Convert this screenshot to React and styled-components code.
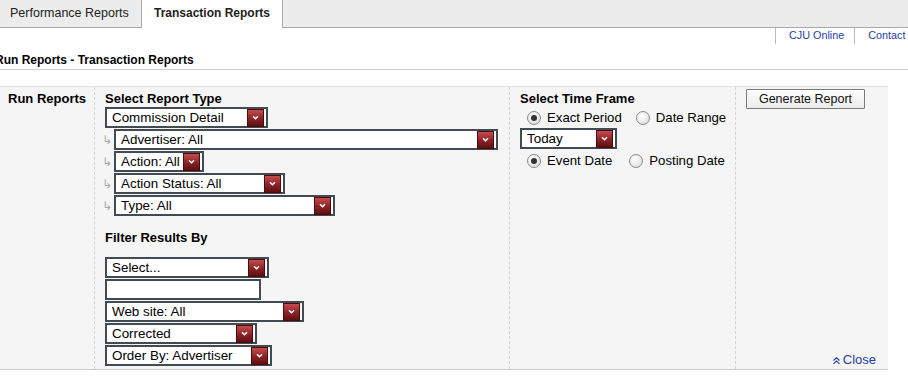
import React from 'react'
import styled, { createGlobalStyle } from 'styled-components'

const GlobalStyle = createGlobalStyle`
  body {
    margin: 0;
    background: #fff;
    font-family: "Liberation Sans", Arial, sans-serif;
    color: #000;
    overflow: hidden;
  }
`

const Page = styled.div`
  width: 908px;
  height: 376px;
  overflow: hidden;
`

const TabBar = styled.div`
  display: flex;
  height: 27px;
  background: #ececec;
  border-bottom: 1px solid #a8a8a8;
`

const Tab = styled.div`
  width: ${ p => p.w }px;
  box-sizing: border-box;
  height: ${ p => p.active ? 28 : 27 }px;
  line-height: 27px;
  padding-left: ${ p => p.active ? 12 : 10 }px;
  font-size: ${ p => p.active ? '12px' : '12.5px' };
  font-weight: ${ p => p.active ? 'bold' : 'normal' };
  color: #222;
  background: ${ p => p.active ? '#fff' : 'transparent' };
  border-left: ${ p => p.active ? '1px solid #a8a8a8' : 'none' };
  border-right: ${ p => p.active ? '1px solid #a8a8a8' : 'none' };
`

const LinkRow = styled.div`
  display: flex;
  width: 960px;
  height: 16px;
  padding-left: 775px;
  box-sizing: border-box;
`

const TopLink = styled.a`
  display: block;
  flex-shrink: 0;
  border-left: 1px solid #bdbdbd;
  padding: 0 10px 0 13px;
  font-size: 10.8px;
  line-height: 15px;
  color: #1f3ea6;
  text-decoration: none;
  white-space: nowrap;
`

const Title = styled.div`
  margin: 0 0 0 -5px;
  padding: 8px 0 1px;
  font-size: 12px;
  font-weight: bold;
  line-height: 16px;
  border-bottom: 1px solid #cfcfcf;
  width: 913px;
`

const Panel = styled.div`
  display: flex;
  width: 888px;
  margin-top: 16px;
  background: #f5f5f5;
  border-top: 1px solid #e2e2e2;
  border-bottom: 1px solid #cbcbcb;
`

const LabelCol = styled.div`
  width: 95px;
  box-sizing: border-box;
  padding: 4px 0 0 8px;
  border-right: 1px dashed #d2d2d2;
  font-size: 13px;
  font-weight: bold;
  line-height: 16px;
`

const Col = styled.div`
  width: ${ p => p.w ? p.w + 'px' : 'auto' };
  flex: ${ p => p.w ? 'none' : 1 };
  box-sizing: border-box;
  padding: ${ p => p.pad || '4px 10px 2px' };
  border-right: ${ p => p.divider ? '1px dashed #d2d2d2' : 'none' };
  display: flex;
  flex-direction: column;
  align-items: flex-start;
`

const Heading = styled.div`
  font-size: 13px;
  font-weight: bold;
  line-height: 16px;
  margin-top: ${ p => p.mt || 0 }px;
  margin-bottom: ${ p => p.mb || 0 }px;
`

const SelectBox = styled.div`
  display: flex;
  align-items: center;
  width: ${ p => p.w }px;
  height: 21px;
  box-sizing: border-box;
  background: #fff;
  border: 2px solid #434b52;
  margin-bottom: 1px;
  font-size: 13.4px;
`

const SelectText = styled.span`
  flex: 1;
  padding-left: 5px;
  white-space: nowrap;
  overflow: hidden;
`

const ArrowBtn = styled.span`
  display: flex;
  align-items: center;
  justify-content: center;
  width: 15px;
  height: 16px;
  margin-right: 2px;
  background: linear-gradient(#c54c4f, #8a2225 55%, #5e0f12);
  border: 1px solid #4c0a0c;
`

const TextBox = styled.div`
  width: ${ p => p.w }px;
  height: 21px;
  box-sizing: border-box;
  background: #fff;
  border: 2px solid #434b52;
  margin-bottom: 1px;
`

const SubRow = styled.div`
  display: flex;
  align-items: center;
  margin-left: -3px;
`

const Branch = styled.span`
  width: 12px;
  font-family: "DejaVu Sans", sans-serif;
  font-size: 12px;
  color: #a8a8a8;
  line-height: 21px;
`

const RadioRow = styled.div`
  display: flex;
  align-items: center;
  height: 21px;
  padding-left: 7px;
  font-size: 13.2px;
  white-space: nowrap;
`

const RadioItem = styled.label`
  display: flex;
  flex-shrink: 0;
  align-items: center;
  gap: 6px;
  margin-right: ${ p => p.mr || 0 }px;
`

const RadioCircle = styled.span`
  width: 12px;
  height: 12px;
  flex-shrink: 0;
  border-radius: 50%;
  border: 1px solid #8a8a8a;
  background: radial-gradient(circle at 40% 35%, #fff, #d8d8d8);
  display: flex;
  align-items: center;
  justify-content: center;
  &::after {
    content: '';
    display: ${ p => p.checked ? 'block' : 'none' };
    width: 6px;
    height: 6px;
    border-radius: 50%;
    background: #333;
  }
`

const Button = styled.button`
  font-family: "Liberation Sans", Arial, sans-serif;
  font-size: 12.5px;
  height: 20px;
  width: 119px;
  padding: 0;
  margin-top: -1px;
  background: linear-gradient(#fdfdfd, #ececec);
  border: 1px solid #7a7a7a;
  border-radius: 1px;
  color: #111;
`

const CloseLink = styled.a`
  margin-top: auto;
  align-self: flex-end;
  display: flex;
  align-items: center;
  gap: 2px;
  font-size: 13px;
  line-height: 16px;
  color: #1f3ea6;
  text-decoration: none;
`

const Chevron = () => (
  <svg width="9" height="7" viewBox="0 0 9 7">
    <path d="M2 2.2 L4.5 4.7 L7 2.2" fill="none" stroke="#fff" strokeWidth="1.6" />
  </svg>
)

const Select = ({ w, children }) => (
  <SelectBox w={w}>
    <SelectText>{children}</SelectText>
    <ArrowBtn><Chevron /></ArrowBtn>
  </SelectBox>
)

const SubSelect = ({ w, children }) => (
  <SubRow>
    <Branch>↳</Branch>
    <Select w={w}>{children}</Select>
  </SubRow>
)

const Radio = ({ checked, label, mr }) => (
  <RadioItem mr={mr}>
    <RadioCircle checked={checked} />
    {label}
  </RadioItem>
)

export default function App() {
  return (
    <Page>
      <GlobalStyle />
      <TabBar>
        <Tab w={141}>Performance Reports</Tab>
        <Tab w={142} active>Transaction Reports</Tab>
      </TabBar>
      <LinkRow>
        <TopLink>CJU Online</TopLink>
        <TopLink>Contact Us</TopLink>
      </LinkRow>
      <Title>Run Reports - Transaction Reports</Title>
      <Panel>
        <LabelCol>Run Reports</LabelCol>
        <Col w={415} divider>
          <Heading>Select Report Type</Heading>
          <Select w={163}>Commission Detail</Select>
          <SubSelect w={384}>Advertiser: All</SubSelect>
          <SubSelect w={90}>Action: All</SubSelect>
          <SubSelect w={171}>Action Status: All</SubSelect>
          <SubSelect w={221}>Type: All</SubSelect>
          <Heading mt={13} mb={11}>Filter Results By</Heading>
          <Select w={164}>Select...</Select>
          <TextBox w={156} />
          <Select w={199}>Web site: All</Select>
          <Select w={152}>Corrected</Select>
          <Select w={167}>Order By: Advertiser</Select>
        </Col>
        <Col w={226} divider>
          <Heading>Select Time Frame</Heading>
          <RadioRow>
            <Radio checked label="Exact Period" mr={14} />
            <Radio label="Date Range" />
          </RadioRow>
          <Select w={97}>Today</Select>
          <RadioRow>
            <Radio checked label="Event Date" mr={17} />
            <Radio label="Posting Date" />
          </RadioRow>
        </Col>
        <Col pad="3px 12px 1px 10px">
          <Button>Generate Report</Button>
          <CloseLink>
            <svg width="9" height="9" viewBox="0 0 9 9">
              <path d="M1.5 4.5 L4.5 1.8 L7.5 4.5 M1.5 7.8 L4.5 5.1 L7.5 7.8" fill="none" stroke="#1f3ea6" strokeWidth="1.1" />
            </svg>
            Close
          </CloseLink>
        </Col>
      </Panel>
    </Page>
  )
}
